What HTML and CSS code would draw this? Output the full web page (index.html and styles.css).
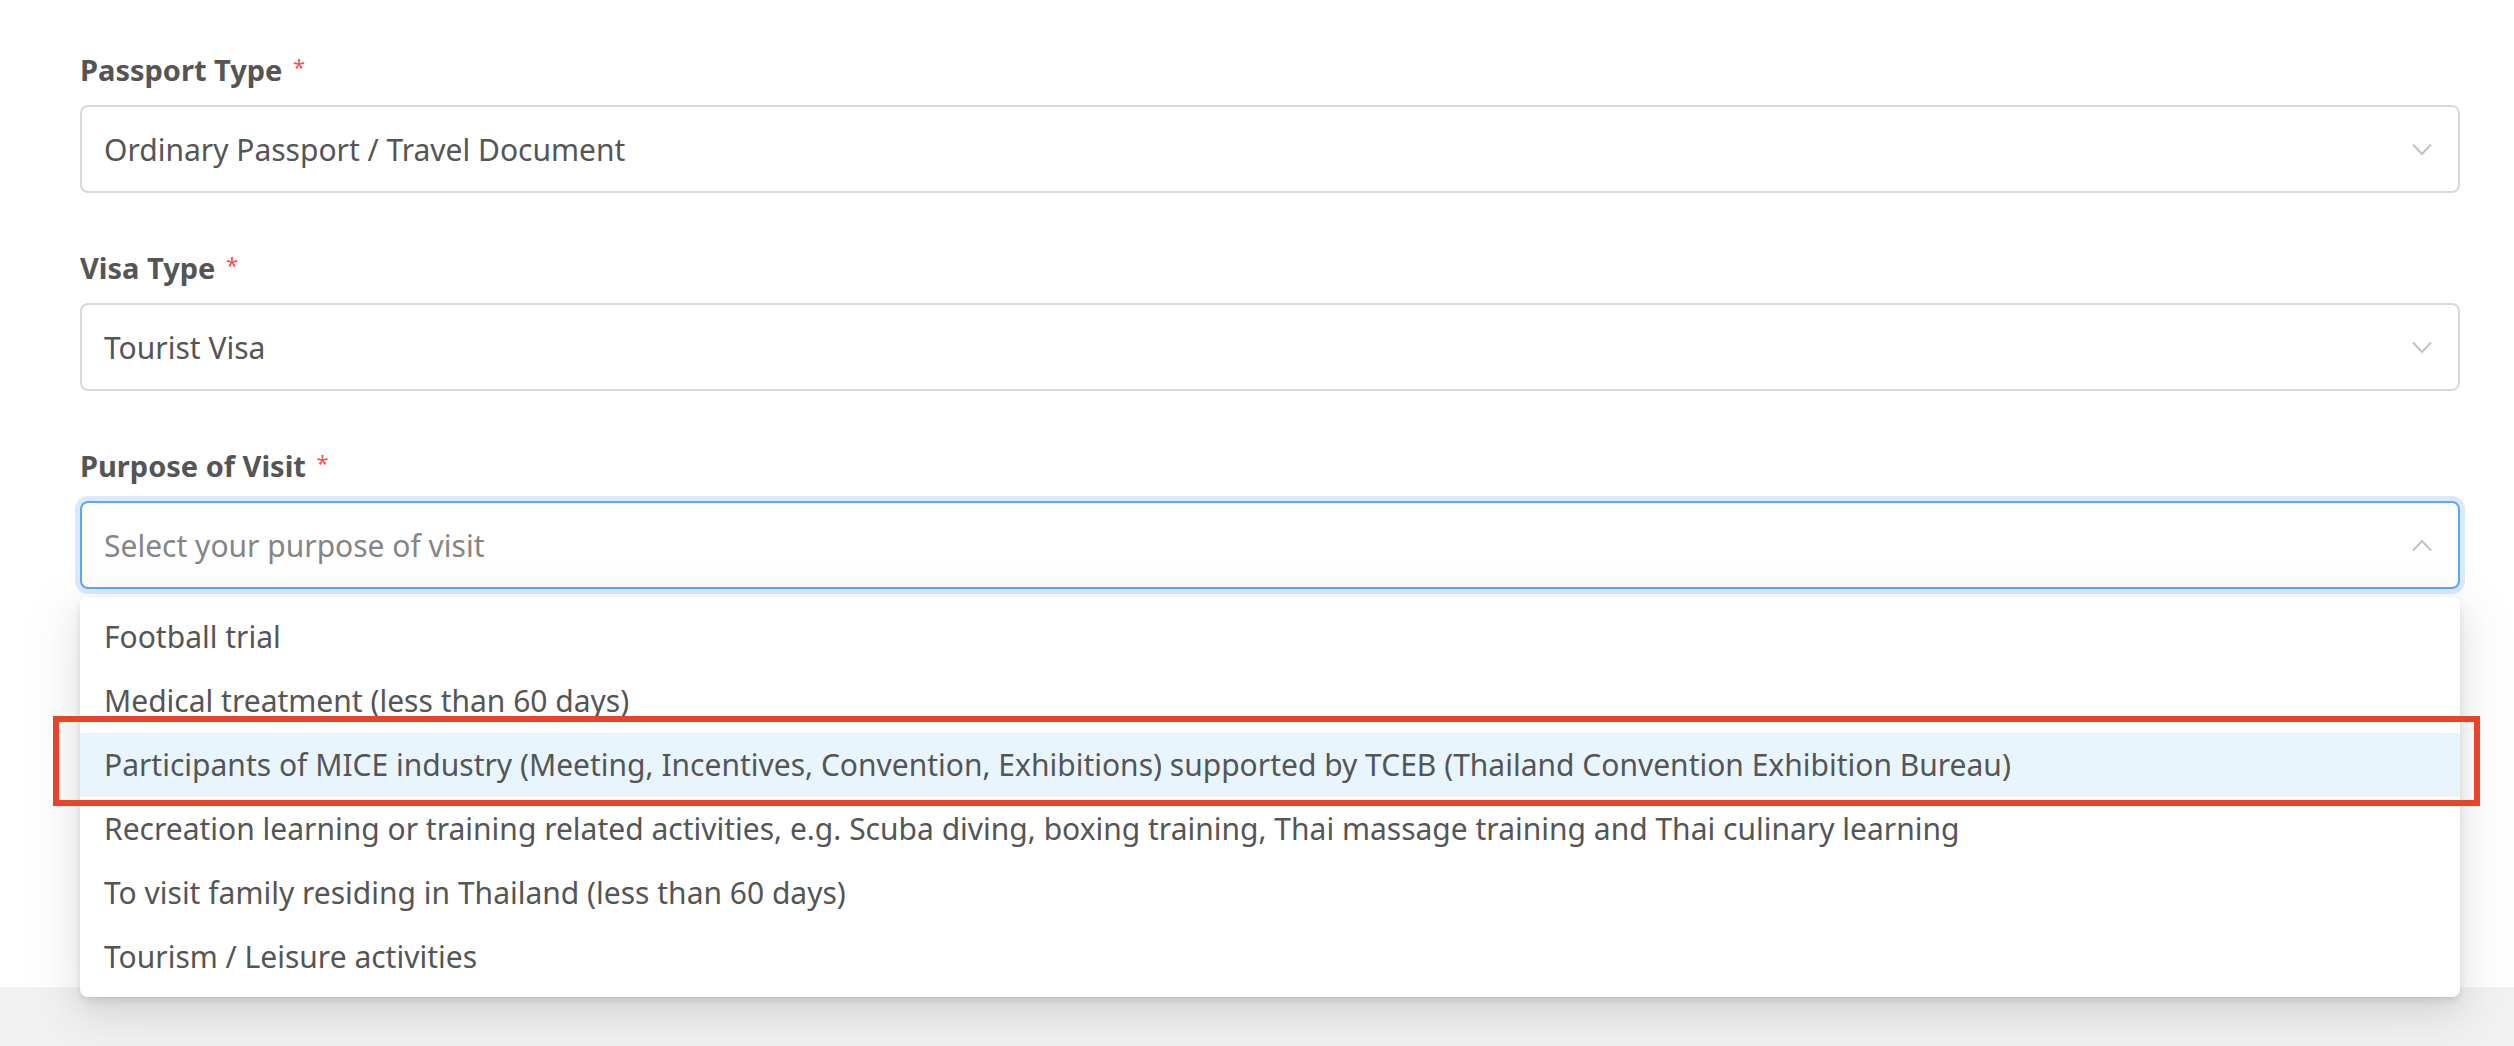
FILE: index.html
```html
<!DOCTYPE html>
<html>
<head>
<meta charset="utf-8">
<link rel="stylesheet" href="styles.css">
</head>
<body>
<main class="page">
  <form class="form">
    <div class="item">
      <div class="label">Passport Type <span class="req">*</span></div>
      <div class="select">
        <span class="value">Ordinary Passport / Travel Document</span>
        <svg class="arrow" width="20" height="13" viewBox="0 0 20 13"><polyline points="1,1.5 10,11 19,1.5" fill="none" stroke="#c2c2c2" stroke-width="2"/></svg>
      </div>
    </div>
    <div class="item">
      <div class="label">Visa Type <span class="req">*</span></div>
      <div class="select">
        <span class="value">Tourist Visa</span>
        <svg class="arrow" width="20" height="13" viewBox="0 0 20 13"><polyline points="1,1.5 10,11 19,1.5" fill="none" stroke="#c2c2c2" stroke-width="2"/></svg>
      </div>
    </div>
    <div class="item open">
      <div class="label">Purpose of Visit <span class="req">*</span></div>
      <div class="select focused">
        <span class="value placeholder">Select your purpose of visit</span>
        <svg class="arrow" width="20" height="13" viewBox="0 0 20 13"><polyline points="1,11.5 10,2 19,11.5" fill="none" stroke="#c2c2c2" stroke-width="2"/></svg>
      </div>
      <div class="dropdown">
        <div class="option">Football trial</div>
        <div class="option">Medical treatment (less than 60 days)</div>
        <div class="option active">Participants of MICE industry (Meeting, Incentives, Convention, Exhibitions) supported by TCEB (Thailand Convention Exhibition Bureau)</div>
        <div class="option">Recreation learning or training related activities, e.g. Scuba diving, boxing training, Thai massage training and Thai culinary learning</div>
        <div class="option">To visit family residing in Thailand (less than 60 days)</div>
        <div class="option">Tourism / Leisure activities</div>
        <div class="mark"></div>
      </div>
    </div>
  </form>
</main>
<footer class="footer"></footer>
</body>
</html>
```
FILE: styles.css
```css
html, body {
  margin: 0;
  padding: 0;
  overflow: visible;
}
body {
  background: #fff;
  font-family: "Noto Sans", "Open Sans", sans-serif;
  color: #595959;
}
.page {
  display: block;
  background: #fff;
  height: 987px;
  padding: 44px 54px 0 80px;
  box-sizing: border-box;
  overflow: visible;
}
.footer {
  height: 59px;
  background: #f2f2f2;
}
.form {
  display: flex;
  flex-direction: column;
}
.item {
  position: relative;
  margin-bottom: 49px;
}
.item.open {
  z-index: 10;
}
.label {
  font-size: 29px;
  line-height: 44px;
  font-weight: 700;
  color: #555;
  padding-bottom: 13px;
}
.req {
  color: #ff4d4f;
  font-size: 22px;
  font-weight: 400;
  vertical-align: 6px;
  margin-left: 3px;
}
.select {
  height: 88px;
  box-sizing: border-box;
  border: 2px solid #d9d9d9;
  border-radius: 8px;
  display: flex;
  align-items: center;
  padding: 0 26px 0 22px;
}
.select.focused {
  border-color: #5aa6f8;
  box-shadow: 0 0 0 5px #dbe9fc;
}
.value {
  flex: 1;
  font-size: 30px;
  color: #555;
}
.value.placeholder {
  color: #858585;
}
.arrow {
  flex: none;
}
.dropdown {
  position: absolute;
  left: 0;
  right: 0;
  top: calc(100% + 8px);
  background: #fff;
  border-radius: 8px;
  padding: 8px 0;
  box-shadow: 0 4px 10px -2px rgba(0,0,0,.14), 0 12px 32px 0 rgba(0,0,0,.08), 0 18px 56px 16px rgba(0,0,0,.05);
  z-index: 20;
}
.option {
  height: 64px;
  line-height: 64px;
  padding: 0 24px;
  font-size: 30px;
  color: #555;
  white-space: nowrap;
}
.option.active {
  background: #e8f5fd;
}
.mark {
  position: absolute;
  left: -27px;
  right: -20px;
  top: 119px;
  height: 90px;
  box-sizing: border-box;
  border: 6px solid #ea4328;
}
```
